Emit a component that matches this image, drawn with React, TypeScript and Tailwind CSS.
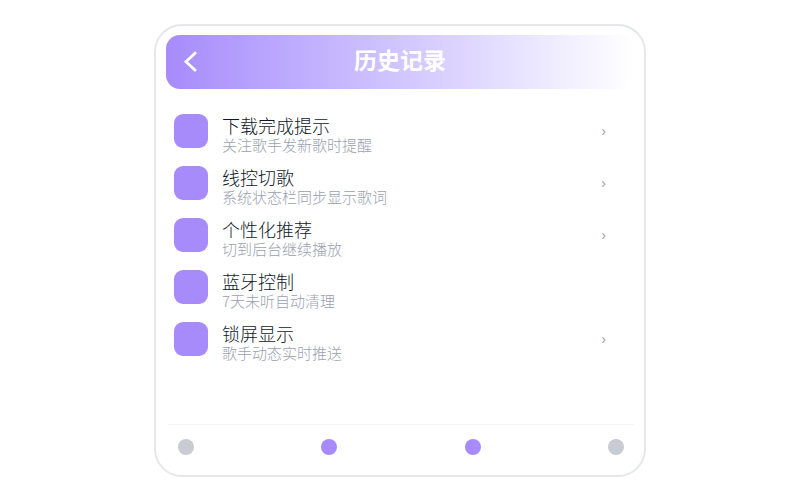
type Setting = {
  title: string;
  description: string;
  hasDetail: boolean;
};

const settings: Setting[] = [
  { title: "下载完成提示", description: "关注歌手发新歌时提醒", hasDetail: true },
  { title: "线控切歌", description: "系统状态栏同步显示歌词", hasDetail: true },
  { title: "个性化推荐", description: "切到后台继续播放", hasDetail: true },
  { title: "蓝牙控制", description: "7天未听自动清理", hasDetail: false },
  { title: "锁屏显示", description: "歌手动态实时推送", hasDetail: true },
];

const tabs = [
  { id: "home", label: "首页", active: false },
  { id: "library", label: "音乐库", active: true },
  { id: "history", label: "历史", active: true },
  { id: "profile", label: "我的", active: false },
];

function Header() {
  return (
    <header className="flex items-center h-[54px] px-4 rounded-[14px] bg-linear-to-r from-[#a78bfa] to-white text-white">
      <button type="button" aria-label="返回" className="flex w-6">
        <svg viewBox="0 0 18 24" className="w-[18px] h-6" fill="none" stroke="currentColor" strokeWidth="2.8">
          <path d="M14 2.2 4 11.7 14 21" />
        </svg>
      </button>
      <h1 className="flex-1 pb-1.5 text-center text-[23px] leading-8 font-bold">历史记录</h1>
      <span className="w-6" />
    </header>
  );
}

function SettingRow({ title, description, hasDetail }: Setting) {
  return (
    <li className="flex items-center h-[52px] pl-2 pr-7">
      <span className="size-[34px] rounded-[9px] bg-[#a78bfa]" />
      <div className="flex-1 ml-3.5 pt-2">
        <p className="text-lg leading-5 font-light text-gray-900">{title}</p>
        <p className="text-[15px] leading-5 font-light text-gray-400">{description}</p>
      </div>
      {hasDetail && (
        <button
          type="button"
          aria-label={title}
          className="text-sm leading-5 text-gray-400 font-['Liberation_Sans',sans-serif]"
        >
          ›
        </button>
      )}
    </li>
  );
}

function TabBar() {
  return (
    <nav className="flex items-center justify-between px-2.5 pt-3.5 pb-2.5 ml-0.5 border-t border-gray-100">
      {tabs.map((tab) => (
        <button
          key={tab.id}
          type="button"
          aria-label={tab.label}
          className={tab.active ? "size-4 rounded-full bg-[#a78bfa]" : "size-4 rounded-full bg-[#c8ccd2]"}
        />
      ))}
    </nav>
  );
}

export default function App() {
  return (
    <div className="min-h-screen bg-white py-6 px-4 font-['Noto_Sans_CJK_SC',sans-serif]">
      <main className="max-w-[492px] mx-auto p-2.5 pt-[9px] border-2 border-gray-200 rounded-[28px] bg-white">
        <Header />

        {/* Settings list */}
        <ul className="pt-4 pb-[59px]">
          {settings.map((setting) => (
            <SettingRow key={setting.title} {...setting} />
          ))}
        </ul>

        <TabBar />
      </main>
    </div>
  );
}
